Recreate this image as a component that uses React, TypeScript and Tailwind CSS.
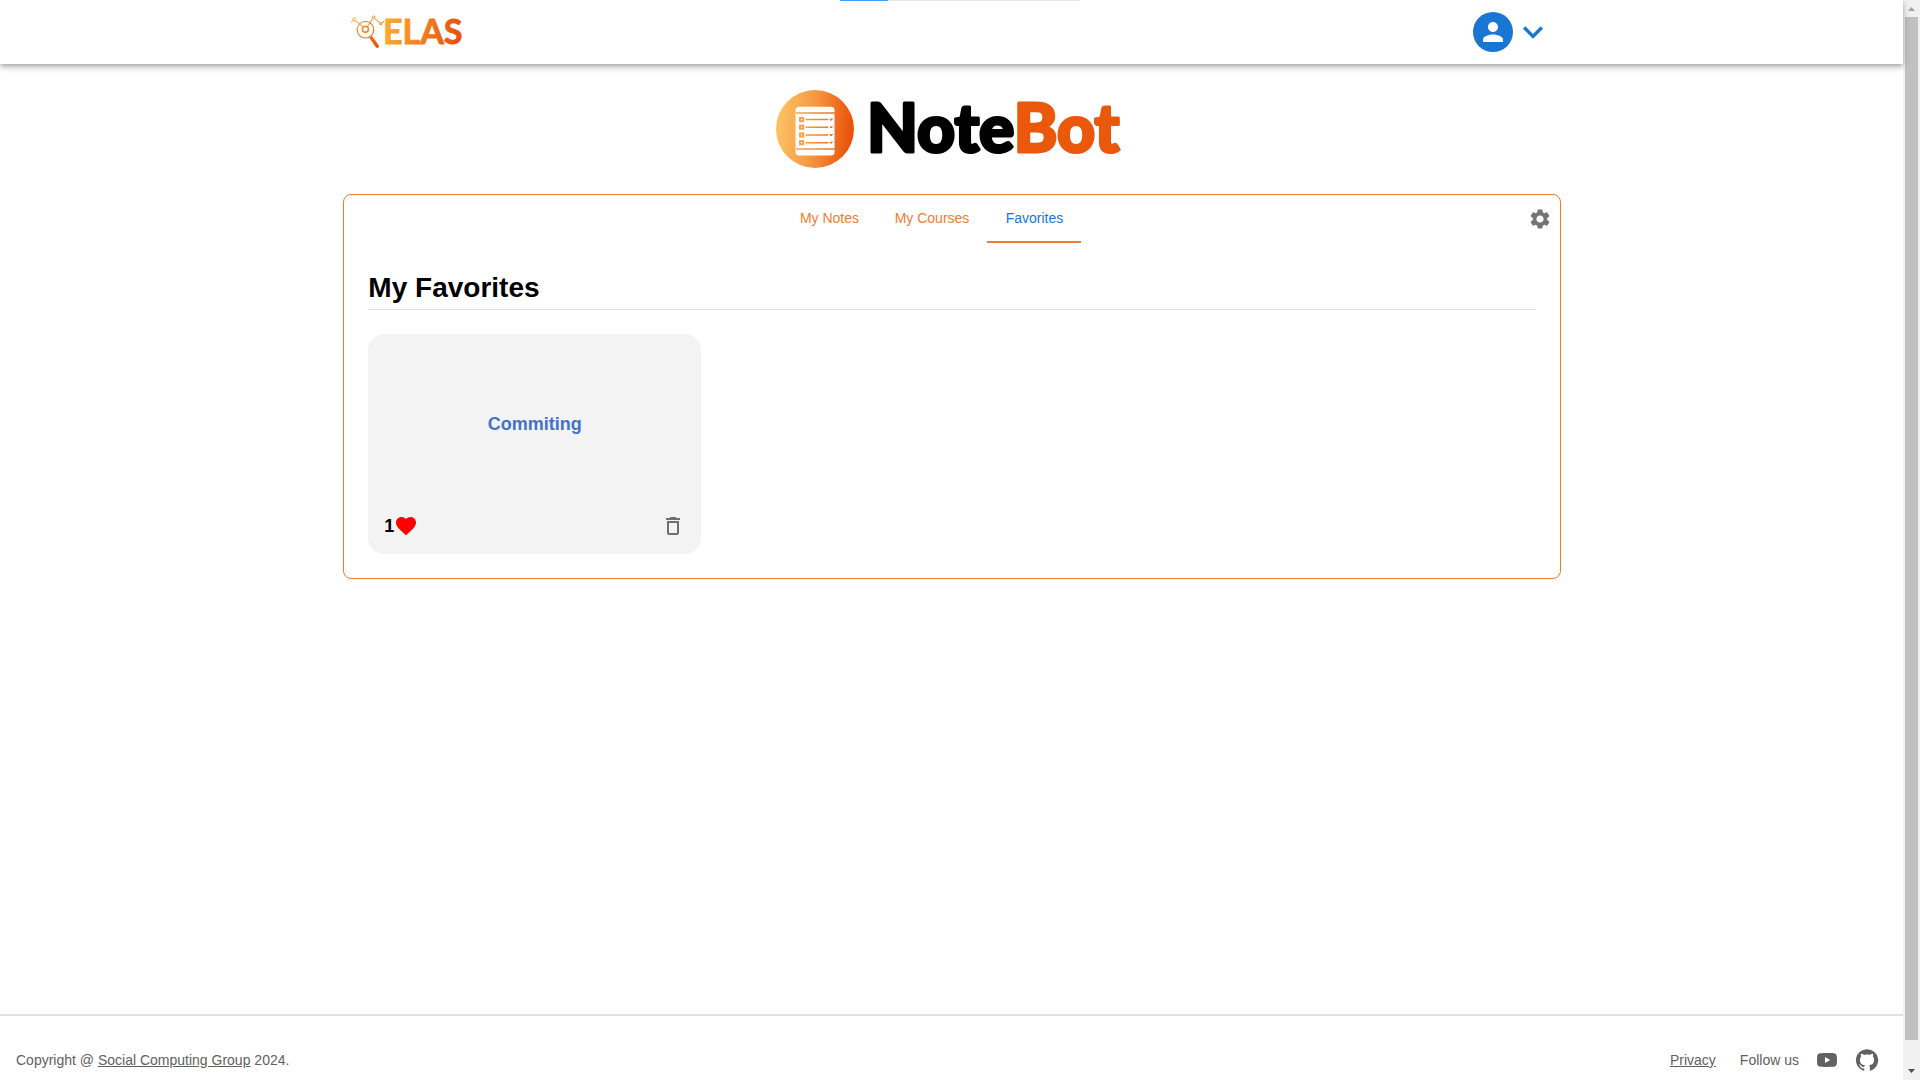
import React from "react";

function ElasLogo() {
  return (
    <svg width="124" height="48" viewBox="0 -4 124 48" role="img" aria-label="ELAS">
      <defs>
        <linearGradient id="elasText" gradientUnits="userSpaceOnUse" x1="34" y1="0" x2="111" y2="14">
          <stop offset="0" stopColor="#fdb02c" />
          <stop offset="1" stopColor="#e8500b" />
        </linearGradient>
        <linearGradient id="elasIcon" gradientUnits="userSpaceOnUse" x1="2" y1="4" x2="28" y2="34">
          <stop offset="0" stopColor="#fbb040" />
          <stop offset="1" stopColor="#e8500b" />
        </linearGradient>
      </defs>
      <g fill="none" stroke="url(#elasIcon)" strokeWidth="1">
        <path d="M0 10.5 2.2 8.6M4.3 8.6l7.5 6M16.5 14.4l5.2-7.8M23.6 6.2l5.2 4.8M30.6 11l2.4-1.8" />
        <circle cx="3.2" cy="7.6" r="1.3" />
        <circle cx="22.6" cy="5.2" r="1.3" />
        <circle cx="29.7" cy="11.7" r="1.1" />
        <circle cx="14.5" cy="17.7" r="8.3" strokeWidth="1.2" />
        <circle cx="14.4" cy="17.2" r="3" strokeWidth="1.5" />
        <path d="M20.4 26 26.3 34.2" strokeWidth="3.4" strokeLinecap="round" />
      </g>
      <text
        x="32"
        y="32"
        fill="url(#elasText)"
        stroke="url(#elasText)"
        strokeWidth="0.8"
        strokeLinejoin="round"
        className="font-['Lato',sans-serif] text-[34px] font-bold"
      >
        ELAS
      </text>
    </svg>
  );
}

function NoteBotLogo() {
  return (
    <svg width="352" height="82" viewBox="0 0 352 82" role="img" aria-label="NoteBot" className="overflow-visible">
      <defs>
        <linearGradient id="disc" x1="0" y1="0" x2="1" y2="0.1">
          <stop offset="0" stopColor="#fec768" />
          <stop offset="0.5" stopColor="#f69a45" />
          <stop offset="1" stopColor="#e9530a" />
        </linearGradient>
        <linearGradient id="row" gradientUnits="userSpaceOnUse" x1="22" y1="0" x2="56" y2="0">
          <stop offset="0" stopColor="#f9a548" />
          <stop offset="1" stopColor="#ee7426" />
        </linearGradient>
      </defs>
      <circle cx="39" cy="41" r="39" fill="url(#disc)" />
      <path
        fill="#fff"
        d="M23 18.7h32a3.5 3.5 0 0 1 3.5 3.5V64a3.5 3.5 0 0 1-3.5 3.5H23a3.5 3.5 0 0 1-3.5-3.5V22.2a3.5 3.5 0 0 1 3.5-3.5z"
      />
      <g stroke="url(#row)" fill="none">
        <path d="M20 25h38.5v.01M20 61h38.5v.01" strokeWidth="1.3" />
        {[31.5, 39.2, 47, 54.7].map((y) => (
          <g key={y}>
            <rect x="24" y={y - 1.6} width="3.2" height="3.2" strokeWidth="1.9" />
            <path d={`M29.5 ${y}H52v.01`} strokeWidth="1.6" />
            <path d={`M54 ${y}h2v.01`} strokeWidth="1.8" />
          </g>
        ))}
      </g>
      <text
        x="91"
        y="64"
        strokeWidth="3"
        strokeLinejoin="round"
        className="font-['Lato',sans-serif] text-[66px] font-black"
      >
        <tspan fill="#000" stroke="#000">Note</tspan>
        <tspan fill="#ea580c" stroke="#ea580c">Bot</tspan>
      </text>
    </svg>
  );
}

function Icon({ d, className }: { d: string; className: string }) {
  return (
    <svg viewBox="0 0 24 24" fill="currentColor" aria-hidden="true" className={className}>
      <path d={d} />
    </svg>
  );
}

const PERSON =
  "M12 12c2.21 0 4-1.79 4-4s-1.79-4-4-4-4 1.79-4 4 1.79 4 4 4m0 2c-2.67 0-8 1.34-8 4v2h16v-2c0-2.66-5.33-4-8-4";
const CHEVRON = "M7.41 8.59 12 13.17l4.59-4.58L18 10l-6 6-6-6z";
const GEAR =
  "M19.14 12.94c.04-.3.06-.61.06-.94 0-.32-.02-.64-.07-.94l2.03-1.58c.18-.14.23-.41.12-.61l-1.92-3.32c-.12-.22-.37-.29-.59-.22l-2.39.96c-.5-.38-1.03-.7-1.62-.94l-.36-2.54c-.04-.24-.24-.41-.48-.41h-3.84c-.24 0-.43.17-.47.41l-.36 2.54c-.59.24-1.13.57-1.62.94l-2.39-.96c-.22-.08-.47 0-.59.22L2.74 8.87c-.12.21-.08.47.12.61l2.03 1.58c-.05.3-.09.63-.09.94s.02.64.07.94l-2.03 1.58c-.18.14-.23.41-.12.61l1.92 3.32c.12.22.37.29.59.22l2.39-.96c.5.38 1.03.7 1.62.94l.36 2.54c.05.24.24.41.48.41h3.84c.24 0 .44-.17.47-.41l.36-2.54c.59-.24 1.13-.56 1.62-.94l2.39.96c.22.08.47 0 .59-.22l1.92-3.32c.12-.22.07-.47-.12-.61zM12 15.6c-1.98 0-3.6-1.62-3.6-3.6s1.62-3.6 3.6-3.6 3.6 1.62 3.6 3.6-1.62 3.6-3.6 3.6";
const HEART =
  "m12 21.35-1.45-1.32C5.4 15.36 2 12.28 2 8.5 2 5.42 4.42 3 7.5 3c1.74 0 3.41.81 4.5 2.09C13.09 3.81 14.76 3 16.5 3 19.58 3 22 5.42 22 8.5c0 3.78-3.4 6.86-8.55 11.54z";
const TRASH = "M6 19c0 1.1.9 2 2 2h8c1.1 0 2-.9 2-2V7H6zM8 9h8v10H8zm7.5-5-1-1h-5l-1 1H5v2h14V4z";
const YOUTUBE =
  "M10 15l5.19-3L10 9v6m11.56-7.83c.13.47.22 1.1.28 1.9.07.8.1 1.49.1 2.09L22 12c0 2.19-.16 3.8-.44 4.83-.25.9-.83 1.48-1.73 1.73-.47.13-1.33.22-2.65.28-1.3.07-2.49.1-3.59.1L12 19c-4.19 0-6.8-.16-7.83-.44-.9-.25-1.48-.83-1.73-1.73-.13-.47-.22-1.1-.28-1.9-.07-.8-.1-1.49-.1-2.09L2 12c0-2.19.16-3.8.44-4.83.25-.9.83-1.48 1.73-1.73.47-.13 1.33-.22 2.65-.28 1.3-.07 2.49-.1 3.59-.1L12 5c4.19 0 6.8.16 7.83.44.9.25 1.48.83 1.73 1.73z";
const GITHUB =
  "M12 1.27a11 11 0 00-3.48 21.46c.55.09.73-.28.73-.55v-1.84c-3.03.64-3.67-1.46-3.67-1.46-.55-1.29-1.28-1.65-1.28-1.65-.92-.65.1-.65.1-.65 1.1 0 1.73 1.1 1.73 1.1.92 1.65 2.57 1.2 3.21.92a2 2 0 01.64-1.47c-2.47-.27-5.04-1.19-5.04-5.5 0-1.1.46-2.1 1.2-2.84a3.76 3.76 0 010-2.93s.91-.28 3.11 1.1c1.8-.49 3.7-.49 5.5 0 2.1-1.38 3.02-1.1 3.02-1.1a3.76 3.76 0 01.1 2.93c.83.74 1.2 1.74 1.2 2.94 0 4.21-2.57 5.13-5.04 5.4.45.37.82.92.82 2.02v3.03c0 .27.1.64.73.55A11 11 0 0012 1.27";

function Header() {
  return (
    <header className="relative z-10 flex h-16 shrink-0 justify-center bg-white pl-px shadow-[0_2px_4px_-1px_rgba(0,0,0,0.2),0_4px_5px_0_rgba(0,0,0,0.14),0_1px_10px_0_rgba(0,0,0,0.12)]">
      <div className="flex w-[64%] items-center justify-between px-2">
        <a href="#home">
          <ElasLogo />
        </a>
        <button type="button" aria-label="Account menu" className="flex items-center text-[#1976d2]">
          <span className="flex size-10 items-center justify-center rounded-full bg-[#1976d2] text-white">
            <Icon d={PERSON} className="size-[30px]" />
          </span>
          <Icon d={CHEVRON} className="size-10" />
        </button>
      </div>
    </header>
  );
}

function NoteCard() {
  return (
    <article className="flex h-[220px] w-[333px] flex-col rounded-2xl bg-[#f3f3f3] p-2">
      <a href="#commiting" className="flex flex-1 items-center justify-center text-lg font-bold text-[#4472c4]">
        Commiting
      </a>
      <div className="flex items-center justify-between">
        <div className="flex items-center pl-2 text-lg font-bold">
          <span>1</span>
          <Icon d={HEART} className="size-6 text-[#ff0000]" />
        </div>
        <button type="button" aria-label="Delete" className="flex size-10 items-center justify-center text-[#6f6f6f]">
          <Icon d={TRASH} className="size-6" />
        </button>
      </div>
    </article>
  );
}

function Panel() {
  return (
    <section className="w-[64%] rounded-lg border border-[#ed7d31]">
      <div className="flex items-center">
        <div role="tablist" className="flex h-12 flex-1 justify-center text-sm text-[#ed7d31]">
          <button type="button" role="tab" aria-selected="false" className="w-[94px] border-b-2 border-transparent">
            My Notes
          </button>
          <button type="button" role="tab" aria-selected="false" className="w-[111px] border-b-2 border-transparent">
            My Courses
          </button>
          <button type="button" role="tab" aria-selected="true" className="w-[94px] border-b-2 border-[#ed7d31] text-[#1976d2]">
            Favorites
          </button>
        </div>
        <button type="button" aria-label="Settings" className="flex size-10 items-center justify-center text-[#757575]">
          <Icon d={GEAR} className="size-6" />
        </button>
      </div>
      <div className="p-6">
        <h1 className="border-b border-[#e0e0e0] text-[28px] leading-[42px] font-bold">My Favorites</h1>
        <div className="mt-6 flex flex-wrap gap-6">
          <NoteCard />
        </div>
      </div>
    </section>
  );
}

function Footer() {
  return (
    <footer className="flex shrink-0 items-center justify-between border-t-2 border-[#e0e0e0] px-4 pt-6 text-sm text-[#616161]">
      <p>
        Copyright @{" "}
        <a href="#group" className="underline">
          Social Computing Group
        </a>{" "}
        2024.
      </p>
      <div className="flex items-center">
        <a href="#privacy" className="mr-6 underline">
          Privacy
        </a>
        <span className="mr-2">Follow us</span>
        <a href="#youtube" aria-label="YouTube" className="flex size-10 items-center justify-center">
          <Icon d={YOUTUBE} className="size-6" />
        </a>
        <a href="#github" aria-label="GitHub" className="flex size-10 items-center justify-center">
          <Icon d={GITHUB} className="size-6" />
        </a>
      </div>
    </footer>
  );
}

function Scrollbar() {
  return (
    <div aria-hidden="true" className="flex w-[17px] shrink-0 flex-col items-center bg-[#f1f1f1]">
      <svg width="17" height="17" viewBox="0 0 17 17" className="shrink-0">
        <path d="M5 11h7L8.5 7z" fill="#a3a3a3" />
      </svg>
      <div className="w-[13px] flex-1 bg-[#c1c1c1]" />
      <div className="flex h-10 shrink-0 items-end">
        <svg width="17" height="17" viewBox="0 0 17 17">
          <path d="M5 6h7L8.5 10z" fill="#505050" />
        </svg>
      </div>
    </div>
  );
}

export default function App() {
  return (
    <div className="relative flex h-screen overflow-hidden bg-white font-['Liberation_Sans',Arial,sans-serif] text-black">
      <div className="flex min-w-0 flex-1 flex-col">
        <Header />
        <main className="flex flex-1 flex-col items-center pl-px">
          <div className="py-6">
            <NoteBotLogo />
          </div>
          <Panel />
        </main>
        <Footer />
      </div>
      <Scrollbar />
      <div className="absolute top-0 left-1/2 z-20 h-px w-60 -translate-x-1/2 bg-[#e6e6e6]">
        <div className="h-full w-1/5 bg-[#409eff]" />
      </div>
    </div>
  );
}
